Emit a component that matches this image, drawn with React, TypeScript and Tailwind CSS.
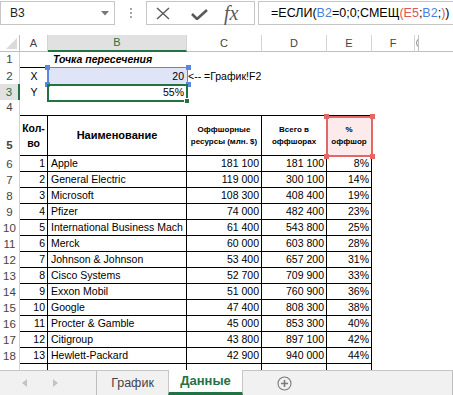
import React from 'react';

interface Company {
  n: number;
  name: string;
  offshore: string;
  total: string;
  pct: string;
}

const rows: Company[] = [
  { n: 1, name: 'Apple', offshore: '181 100', total: '181 100', pct: '8%' },
  { n: 2, name: 'General Electric', offshore: '119 000', total: '300 100', pct: '14%' },
  { n: 3, name: 'Microsoft', offshore: '108 300', total: '408 400', pct: '19%' },
  { n: 4, name: 'Pfizer', offshore: '74 000', total: '482 400', pct: '23%' },
  { n: 5, name: 'International Business Mach', offshore: '61 400', total: '543 800', pct: '25%' },
  { n: 6, name: 'Merck', offshore: '60 000', total: '603 800', pct: '28%' },
  { n: 7, name: 'Johnson & Johnson', offshore: '53 400', total: '657 200', pct: '31%' },
  { n: 8, name: 'Cisco Systems', offshore: '52 700', total: '709 900', pct: '33%' },
  { n: 9, name: 'Exxon Mobil', offshore: '51 000', total: '760 900', pct: '36%' },
  { n: 10, name: 'Google', offshore: '47 400', total: '808 300', pct: '38%' },
  { n: 11, name: 'Procter & Gamble', offshore: '45 000', total: '853 300', pct: '40%' },
  { n: 12, name: 'Citigroup', offshore: '43 800', total: '897 100', pct: '42%' },
  { n: 13, name: 'Hewlett-Packard', offshore: '42 900', total: '940 000', pct: '44%' },
];

const RowHead: React.FC<{ n: number; active?: boolean; tall?: boolean }> = ({ n, active, tall }) => (
  <div
    className={
      'w-[20px] shrink-0 flex justify-center text-[11.5px] ' +
      (tall ? 'items-end pb-[2px] ' : 'items-center ') +
      (active
        ? 'bg-[#e1e1e1] text-[#217346] border-r-2 border-[#217346]'
        : 'bg-white text-[#444] border-r border-[#d4d4d4]')
    }
  >
    {n}
  </div>
);

const ColHead: React.FC<{ w: string; label: string; active?: boolean }> = ({ w, label, active }) => (
  <div
    className={
      w +
      ' shrink-0 flex items-center justify-center text-[11px] border-r border-[#d4d4d4] ' +
      (active
        ? 'bg-[#e1e1e1] text-[#217346] border-b-2 border-b-[#217346]'
        : 'bg-white text-[#444] border-b border-b-[#bfbfbf]')
    }
  >
    {label}
  </div>
);

const Handle: React.FC<{ cls: string }> = ({ cls }) => <div className={'absolute w-[5px] h-[5px] ' + cls} />;

export default function App() {
  return (
    <div className="relative w-[453px] h-[395px] overflow-hidden bg-white font-['Liberation_Sans',Arial,sans-serif] text-black">
      {/* formula bar */}
      <div className="h-[35px] flex items-start pt-px">
        <div className="w-[115px] h-[24px] border border-[#c6c6c6] flex items-center justify-between pl-[9px] pr-[5px]">
          <span className="text-[12px] text-[#222]">B3</span>
          <svg width="8" height="5" viewBox="0 0 8 5">
            <polygon points="0,0 8,0 4,4.5" fill="#777" />
          </svg>
        </div>
        <div className="w-[31px] h-[24px] flex flex-col items-center justify-center gap-[2px]">
          <div className="w-[2px] h-[2px] bg-[#a6a6a6]" />
          <div className="w-[2px] h-[2px] bg-[#a6a6a6]" />
          <div className="w-[2px] h-[2px] bg-[#a6a6a6]" />
        </div>
        <div className="w-[109px] h-[24px] border border-[#c6c6c6] flex items-center pl-[9px]">
          <svg width="14" height="13" viewBox="0 0 14 13" className="mr-[21px]">
            <path d="M1 1 L13 12 M13 1 L1 12" stroke="#595959" strokeWidth="1.4" fill="none" />
          </svg>
          <svg width="17" height="11" viewBox="0 0 17 11" className="mr-[16px] mt-[3px]">
            <path d="M1 5 L6 10 L16 1" stroke="#595959" strokeWidth="2.6" fill="none" />
          </svg>
          <span className="font-['Liberation_Serif',serif] italic text-[20px] leading-none text-[#595959]">fx</span>
        </div>
        <div className="ml-[3px] flex-1 h-[24px] border border-r-0 border-[#c6c6c6] flex items-center pl-[12px] whitespace-nowrap overflow-hidden text-[12.5px]">
          <span>=ЕСЛИ(</span>
          <span className="text-[#4a7fe0]">B2</span>
          <span>=0;0;СМЕЩ</span>
          <span className="text-[#e05555]">(E5</span>
          <span>;</span>
          <span className="text-[#4a7fe0]">B2</span>
          <span>;</span>
          <span className="text-[#e05555]">)</span>
          <span>)</span>
        </div>
      </div>

      {/* column headers */}
      <div className="flex h-[17px]">
        <div className="w-[20px] shrink-0 border-r border-b border-[#bfbfbf] flex items-end justify-end pr-[2px] pb-[2px]">
          <svg width="11" height="11" viewBox="0 0 11 11">
            <polygon points="11,0 11,11 0,11" fill="#dadada" />
          </svg>
        </div>
        <ColHead w="w-[28px]" label="A" />
        <ColHead w="w-[139px]" label="B" active />
        <ColHead w="w-[75px]" label="C" />
        <ColHead w="w-[65px]" label="D" />
        <ColHead w="w-[45px]" label="E" />
        <ColHead w="w-[43px]" label="F" />
        <div className="w-[4px] shrink-0 flex items-center border-r border-b border-[#bfbfbf]">
          <svg width="3" height="8" viewBox="0 0 3 8">
            <path d="M2.5 0.5 Q0.5 4 2.5 7.5" stroke="#8a8a8a" strokeWidth="1" fill="none" />
          </svg>
        </div>
        <div className="flex-1 border-b border-[#bfbfbf]" />
      </div>

      {/* row 1 */}
      <div className="flex h-[16px] text-[10.5px]">
        <RowHead n={1} />
        <div className="w-[28px] shrink-0 border-b border-black" />
        <div className="w-[139px] shrink-0 border-b border-black pl-[5px] font-bold italic leading-[15px] whitespace-nowrap">
          Точка пересечения
        </div>
      </div>

      {/* row 2 */}
      <div className="flex h-[16px] text-[10.5px] leading-[16px]">
        <RowHead n={2} />
        <div className="w-[28px] shrink-0 text-center">X</div>
        <div className="w-[139px] shrink-0 bg-[#dfe5f7] text-right pr-[3px]">20</div>
        <div className="w-[75px] shrink-0 whitespace-nowrap pl-px">&lt;-- =График!F2</div>
      </div>

      {/* row 3 */}
      <div className="flex h-[16px] text-[10.5px] leading-[16px]">
        <RowHead n={3} active />
        <div className="w-[28px] shrink-0 text-center">Y</div>
        <div className="w-[139px] shrink-0 text-right pr-[3px]">55%</div>
      </div>

      {/* row 4 */}
      <div className="flex h-[16px]">
        <RowHead n={4} />
        <div className="w-[28px] shrink-0 border-b border-black" />
        <div className="w-[139px] shrink-0 border-b border-black" />
        <div className="w-[75px] shrink-0 border-b border-black" />
        <div className="w-[65px] shrink-0 border-b border-black" />
        <div className="w-[45px] shrink-0 border-b border-black" />
      </div>

      {/* row 5 headers */}
      <div className="flex h-[40px] font-bold">
        <RowHead n={5} tall />
        <div className="w-[28px] shrink-0 border-r border-b border-black flex items-center justify-center text-center text-[10.5px] leading-[15px]">
          <span>
            Кол-
            <br />
            во
          </span>
        </div>
        <div className="w-[139px] shrink-0 border-r border-b border-black flex items-center justify-center text-[11px]">
          Наименование
        </div>
        <div className="w-[75px] shrink-0 border-r border-b border-black flex items-center justify-center text-center text-[8px] leading-[12px] whitespace-nowrap">
          <span>
            Оффшорные
            <br />
            ресурсы (млн. $)
          </span>
        </div>
        <div className="w-[65px] shrink-0 border-r border-b border-black flex items-center justify-center text-center text-[8px] leading-[12px]">
          <span>
            Всего в
            <br />
            оффшорах
          </span>
        </div>
        <div className="w-[45px] shrink-0 border-r border-b border-black bg-[#fdeaea] flex items-center justify-center text-center text-[8px] leading-[12px]">
          <span>
            %
            <br />
            оффшор
          </span>
        </div>
      </div>

      {/* data rows */}
      {rows.map((r) => (
        <div key={r.n} className="flex h-[16px] text-[10.5px] leading-[15px] whitespace-nowrap">
          <RowHead n={r.n + 5} />
          <div className="w-[28px] shrink-0 border-r border-b border-black text-right pr-[2px]">{r.n}</div>
          <div className="w-[139px] shrink-0 border-r border-b border-black pl-[3px]">{r.name}</div>
          <div className="w-[75px] shrink-0 border-r border-b border-black text-right pr-[2px]">{r.offshore}</div>
          <div className="w-[65px] shrink-0 border-r border-b border-black text-right pr-[2px]">{r.total}</div>
          <div className="w-[45px] shrink-0 border-r border-b border-black text-right pr-[2px]">{r.pct}</div>
        </div>
      ))}

      {/* row 19, cut off */}
      <div className="flex h-[6px]">
        <div className="w-[20px] shrink-0 border-r border-[#d4d4d4]" />
        <div className="w-[28px] shrink-0 border-r border-black" />
        <div className="w-[139px] shrink-0 border-r border-black" />
        <div className="w-[75px] shrink-0 border-r border-black" />
        <div className="w-[65px] shrink-0 border-r border-black" />
        <div className="w-[45px] shrink-0 border-r border-black" />
      </div>

      {/* sheet tabs */}
      <div className="h-[25px] border-t border-[#c6c6c6] bg-[#f1f1f1] flex items-stretch">
        <div className="w-[96px] shrink-0 flex items-center pl-[22px] gap-[26px]">
          <svg width="5" height="8" viewBox="0 0 5 8">
            <polygon points="5,0 5,8 0,4" fill="#c3c3c3" />
          </svg>
          <svg width="5" height="8" viewBox="0 0 5 8">
            <polygon points="0,0 0,8 5,4" fill="#c3c3c3" />
          </svg>
        </div>
        <div className="w-px bg-[#bfbfbf]" />
        <div className="w-[71px] shrink-0 flex items-center justify-center text-[12.5px] text-[#444]">График</div>
        <div className="w-[75px] shrink-0 -mt-px bg-white border-x border-[#c6c6c6] border-b-[3px] border-b-[#217346] flex items-center justify-center text-[13px] font-bold text-[#217346]">
          Данные
        </div>
        <div className="flex-1 flex items-center pl-[34px]">
          <svg width="15" height="15" viewBox="0 0 15 15">
            <circle cx="7.5" cy="7.5" r="6.5" stroke="#7a7a7a" strokeWidth="1.1" fill="none" />
            <path d="M7.5 4 V11 M4 7.5 H11" stroke="#7a7a7a" strokeWidth="1.6" />
          </svg>
        </div>
        <div className="w-px bg-[#bfbfbf]" />
      </div>

      {/* B2 reference highlight */}
      <div className="absolute left-[47px] top-[67px] w-[141px] h-[18px] border border-l-2 border-[#5b87e0]" />
      <Handle cls="left-[45px] top-[65px] bg-[#5b87e0]" />
      <Handle cls="left-[186px] top-[65px] bg-[#5b87e0]" />
      <Handle cls="left-[45px] top-[82px] bg-[#5b87e0]" />
      <Handle cls="left-[186px] top-[82px] bg-[#5b87e0]" />

      {/* active cell B3 */}
      <div className="absolute left-[47px] top-[84px] w-[141px] h-[18px] border-2 border-[#217346]" />
      <div className="absolute left-[184px] top-[98px] w-[6px] h-[6px] bg-[#217346] border border-white" />

      {/* E5 reference highlight */}
      <div className="absolute left-[326px] top-[116px] w-[47px] h-[41px] border-2 border-[#e46666]" />
      <Handle cls="left-[324px] top-[114px] bg-[#e46666]" />
      <Handle cls="left-[370px] top-[114px] bg-[#e46666]" />
      <Handle cls="left-[324px] top-[154px] bg-[#e46666]" />
      <Handle cls="left-[370px] top-[154px] bg-[#e46666]" />
    </div>
  );
}
